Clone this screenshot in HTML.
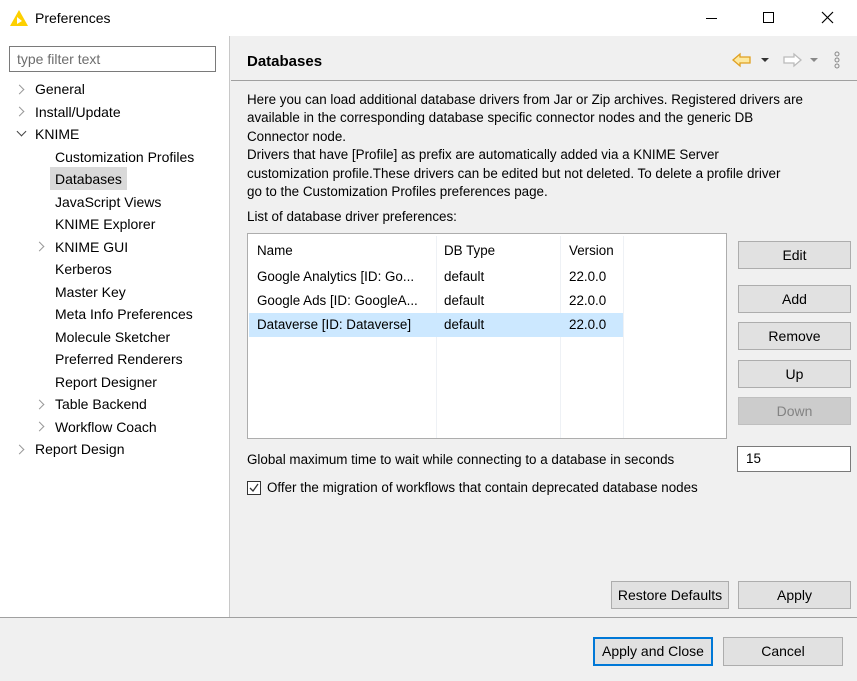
<!DOCTYPE html>
<html><head><meta charset="utf-8"><style>
*{box-sizing:border-box;margin:0;padding:0}
body{width:857px;height:681px;overflow:hidden;background:#f0f0f0;font-family:"Liberation Sans",sans-serif;font-size:14px;color:#000;position:relative}
.a{position:absolute;white-space:nowrap}
.btn{position:absolute;background:#e1e1e1;border:1px solid #adadad;text-align:center;font-size:14px;line-height:26px}
.t{position:absolute;white-space:nowrap;font-size:14px;line-height:22px}
.chev{position:absolute;width:7px;height:7px;border-right:1.5px solid #999;border-bottom:1.5px solid #999}
.d{font-size:13.4px;line-height:18.4px}
</style></head><body>
<div class="a" style="left:0;top:0;width:857px;height:36px;background:#fff"></div>
<svg class="a" style="left:9px;top:9px" width="20" height="18" viewBox="0 0 20 18"><polygon points="10,1 19,17 1,17" fill="#fdd000"/><polygon points="8,8 13,12 8,15" fill="#fff"/></svg>
<div class="a" style="left:35px;top:10px;font-size:14px">Preferences</div>
<div class="a" style="left:706px;top:18px;width:11px;height:1px;background:#000"></div>
<div class="a" style="left:763px;top:12px;width:11px;height:11px;border:1px solid #000"></div>
<svg class="a" style="left:821px;top:11px" width="13" height="13"><path d="M1 1L12 12M12 1L1 12" stroke="#000" stroke-width="1.2"/></svg>

<div class="a" style="left:0;top:36px;width:230px;height:581px;background:#fff;border-right:1px solid #c8c8c8"></div>
<div class="a" style="left:9px;top:46px;width:207px;height:26px;border:1px solid #7a7a7a;background:#fff;color:#6d6d6d;padding-left:7px;line-height:24px">type filter text</div>

<div class="chev" style="left:16px;top:86px;transform:rotate(-45deg)"></div><div class="t" style="left:35px;top:78px">General</div>
<div class="chev" style="left:16px;top:108px;transform:rotate(-45deg)"></div><div class="t" style="left:35px;top:101px">Install/Update</div>
<div class="chev" style="left:18px;top:128px;transform:rotate(45deg);border-color:#444"></div><div class="t" style="left:35px;top:123px">KNIME</div>
<div class="t" style="left:55px;top:146px">Customization Profiles</div>
<div class="a" style="left:50px;top:167px;width:77px;height:23px;background:#d9d9d9"></div>
<div class="t" style="left:55px;top:168px">Databases</div>
<div class="t" style="left:55px;top:191px">JavaScript Views</div>
<div class="t" style="left:55px;top:213px">KNIME Explorer</div>
<div class="chev" style="left:36px;top:243px;transform:rotate(-45deg)"></div><div class="t" style="left:55px;top:236px">KNIME GUI</div>
<div class="t" style="left:55px;top:258px">Kerberos</div>
<div class="t" style="left:55px;top:281px">Master Key</div>
<div class="t" style="left:55px;top:303px">Meta Info Preferences</div>
<div class="t" style="left:55px;top:326px">Molecule Sketcher</div>
<div class="t" style="left:55px;top:348px">Preferred Renderers</div>
<div class="t" style="left:55px;top:371px">Report Designer</div>
<div class="chev" style="left:36px;top:401px;transform:rotate(-45deg)"></div><div class="t" style="left:55px;top:393px">Table Backend</div>
<div class="chev" style="left:36px;top:423px;transform:rotate(-45deg)"></div><div class="t" style="left:55px;top:416px">Workflow Coach</div>
<div class="chev" style="left:16px;top:446px;transform:rotate(-45deg)"></div><div class="t" style="left:35px;top:438px">Report Design</div>

<div class="a" style="left:231px;top:80px;width:626px;height:1px;background:#a0a0a0"></div>
<div class="a" style="left:247px;top:53px;font-weight:bold;font-size:15px">Databases</div>
<svg class="a" style="left:730px;top:50px" width="110" height="20" viewBox="0 0 110 20"><path d="M3 10L10 4V7H20V13H10V16Z" fill="#fde9a0" stroke="#e0a020" stroke-width="1.3"/><path d="M31 8H39L35 12Z" fill="#333"/><path d="M71 10L64 4V7H54V13H64V16Z" fill="#fff" stroke="#bbb" stroke-width="1.3"/><path d="M80 8H88L84 12Z" fill="#888"/><circle cx="107" cy="4" r="2" fill="none" stroke="#888"/><circle cx="107" cy="10" r="2" fill="none" stroke="#888"/><circle cx="107" cy="16" r="2" fill="none" stroke="#888"/></svg>

<div class="a d" style="left:247px;top:91px">Here you can load additional database drivers from Jar or Zip archives. Registered drivers are<br>available in the corresponding database specific connector nodes and the generic DB<br>Connector node.<br>Drivers that have [Profile] as prefix are automatically added via a KNIME Server<br>customization profile.These drivers can be edited but not deleted. To delete a profile driver<br>go to the Customization Profiles preferences page.</div>
<div class="a d" style="left:247px;top:208px">List of database driver preferences:</div>

<div class="a" style="left:247px;top:233px;width:480px;height:206px;background:#fff;border:1px solid #adadad"></div>
<div class="a" style="left:436px;top:236px;width:1px;height:202px;background:#eef1f5"></div>
<div class="a" style="left:560px;top:236px;width:1px;height:202px;background:#eef1f5"></div>
<div class="a" style="left:623px;top:236px;width:1px;height:202px;background:#eef1f5"></div>
<div class="a" style="left:249px;top:313px;width:374px;height:24px;background:#cce8ff"></div>
<div class="a d" style="left:257px;top:242px">Name</div><div class="a d" style="left:444px;top:242px">DB Type</div><div class="a d" style="left:569px;top:242px">Version</div>
<div class="a d" style="left:257px;top:268px">Google Analytics [ID: Go...</div><div class="a d" style="left:444px;top:268px">default</div><div class="a d" style="left:569px;top:268px">22.0.0</div>
<div class="a d" style="left:257px;top:292px">Google Ads [ID: GoogleA...</div><div class="a d" style="left:444px;top:292px">default</div><div class="a d" style="left:569px;top:292px">22.0.0</div>
<div class="a d" style="left:257px;top:316px">Dataverse [ID: Dataverse]</div><div class="a d" style="left:444px;top:316px">default</div><div class="a d" style="left:569px;top:316px">22.0.0</div>

<div class="btn" style="left:738px;top:241px;width:113px;height:28px">Edit</div>
<div class="btn" style="left:738px;top:285px;width:113px;height:28px">Add</div>
<div class="btn" style="left:738px;top:322px;width:113px;height:28px">Remove</div>
<div class="btn" style="left:738px;top:360px;width:113px;height:28px">Up</div>
<div class="btn" style="left:738px;top:397px;width:113px;height:28px;background:#ccc;border-color:#bfbfbf;color:#838383">Down</div>

<div class="a d" style="left:247px;top:451px">Global maximum time to wait while connecting to a database in seconds</div>
<div class="a" style="left:737px;top:446px;width:114px;height:26px;background:#fff;border:1px solid #7a7a7a;padding-left:8px;line-height:24px;font-size:13.4px">15</div>
<div class="a" style="left:247px;top:481px;width:14px;height:14px;border:1px solid #333;background:#fff"></div>
<svg class="a" style="left:248px;top:482px" width="12" height="12"><path d="M2 6L5 9L10 2" stroke="#333" stroke-width="1.3" fill="none"/></svg>
<div class="a d" style="left:267px;top:479px">Offer the migration of workflows that contain deprecated database nodes</div>

<div class="btn" style="left:611px;top:581px;width:118px;height:28px">Restore Defaults</div>
<div class="btn" style="left:738px;top:581px;width:113px;height:28px">Apply</div>

<div class="a" style="left:0;top:617px;width:857px;height:1px;background:#a0a0a0"></div>
<div class="btn" style="left:593px;top:637px;width:120px;height:29px;border:2px solid #0078d7;line-height:25px">Apply and Close</div>
<div class="btn" style="left:723px;top:637px;width:120px;height:29px">Cancel</div>
</body></html>
